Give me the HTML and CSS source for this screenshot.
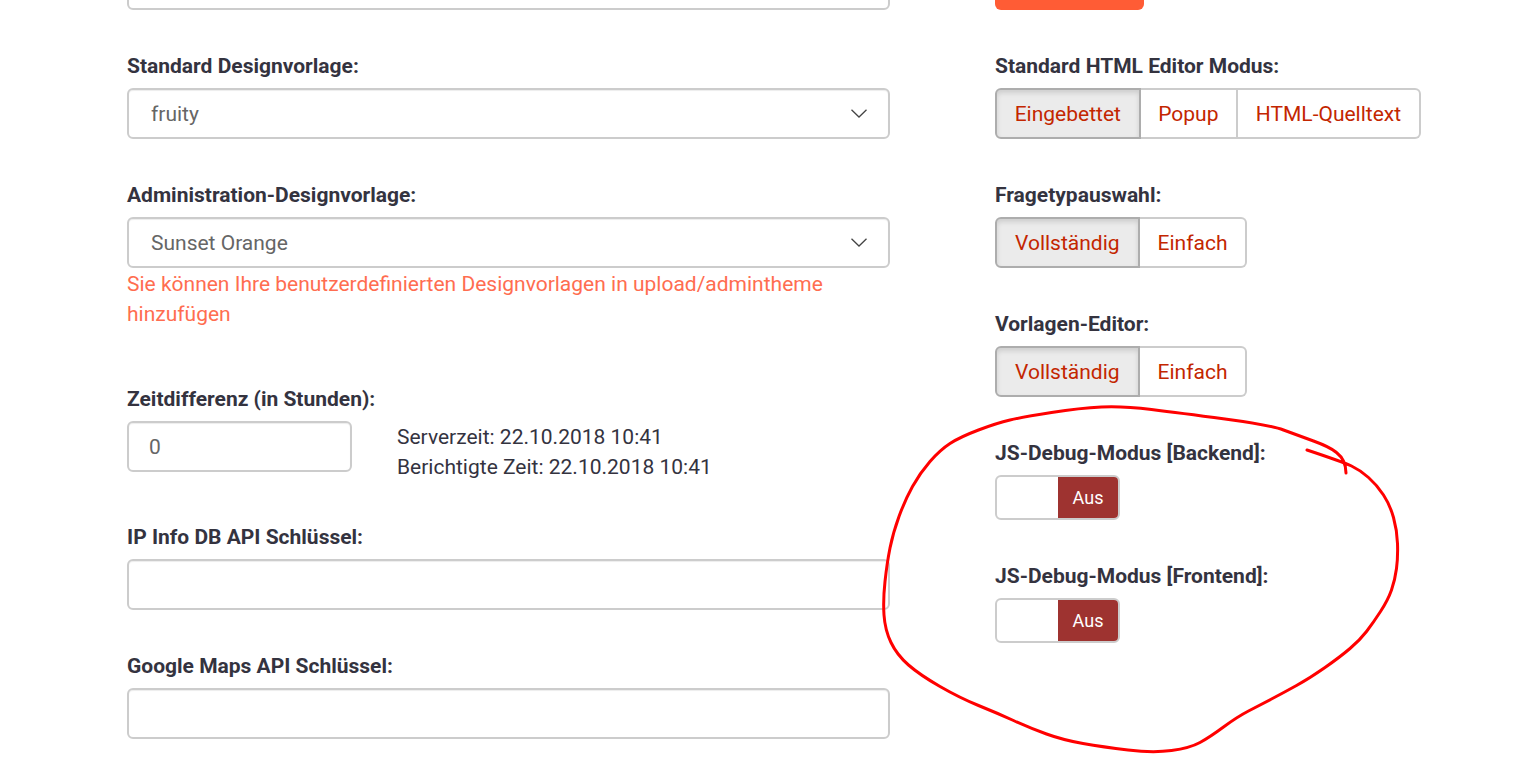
FILE: index.html
```html
<!DOCTYPE html>
<html lang="de">
<head>
<meta charset="utf-8">
<title>Globale Einstellungen</title>
<link rel="stylesheet" href="styles.css">
</head>
<body>
<main class="page">
  <div class="col col-left">
    <div class="group"><div class="control text-input"></div></div>
    <div class="group">
      <label class="label">Standard Designvorlage:</label>
      <div class="control select"><span>fruity</span>
        <svg class="chevron" viewBox="0 0 16 9"><path d="M.5.8 8 8 15.500.8"/></svg></div>
    </div>
    <div class="group group-help">
      <label class="label">Administration-Designvorlage:</label>
      <div class="control select"><span>Sunset Orange</span>
        <svg class="chevron" viewBox="0 0 16 9"><path d="M.5.8 8 8 15.500.8"/></svg></div>
      <p class="help">Sie können Ihre benutzerdefinierten Designvorlagen in upload/admintheme hinzufügen</p>
    </div>
    <div class="group group-time">
      <label class="label">Zeitdifferenz (in Stunden):</label>
      <div class="time-row">
        <div class="control number"><span>0</span></div>
        <div class="time-text"><div>Serverzeit: 22.10.2018 10:41</div><div>Berichtigte Zeit: 22.10.2018 10:41</div></div>
      </div>
    </div>
    <div class="group">
      <label class="label">IP Info DB API Schlüssel:</label>
      <div class="control text-input"></div>
    </div>
    <div class="group">
      <label class="label">Google Maps API Schlüssel:</label>
      <div class="control text-input"></div>
    </div>
  </div>
  <div class="col col-right">
    <div class="group"><div class="orange-btn"></div></div>
    <div class="group">
      <label class="label">Standard HTML Editor Modus:</label>
      <div class="btn-group btn-group-compact"><span class="btn active">Eingebettet</span><span class="btn">Popup</span><span class="btn">HTML-Quelltext</span></div>
    </div>
    <div class="group">
      <label class="label">Fragetypauswahl:</label>
      <div class="btn-group"><span class="btn active">Vollständig</span><span class="btn">Einfach</span></div>
    </div>
    <div class="group">
      <label class="label">Vorlagen-Editor:</label>
      <div class="btn-group"><span class="btn active">Vollständig</span><span class="btn">Einfach</span></div>
    </div>
    <div class="group">
      <label class="label">JS-Debug-Modus [Backend]:</label>
      <div class="toggle"><span class="toggle-off">Aus</span></div>
    </div>
    <div class="group">
      <label class="label">JS-Debug-Modus [Frontend]:</label>
      <div class="toggle"><span class="toggle-off">Aus</span></div>
    </div>
  </div>
</main>
<svg class="scribble" viewBox="0 0 1523 780" width="1523" height="780"><path d="M1307 450Q1343 462 1351.500 466Q1360 470 1368.500 477.500Q1377 485 1383.500 495Q1390 505 1393.500 517.500Q1397 530 1397.500 543.500Q1398 557 1396.500 568.500Q1395 580 1391.500 590Q1388 600 1380.500 611.500Q1373 623 1366.500 631.500Q1360 640 1350 648.500Q1340 657 1325 667.500Q1310 678 1296.500 685.500Q1283 693 1271.500 699Q1260 705 1248.500 711Q1237 717 1223.500 727Q1210 737 1200 742.500Q1190 748 1171.500 750.500Q1153 753 1128 750Q1103 747 1083 743.500Q1063 740 1046.500 734Q1030 728 1013.500 720.500Q997 713 978.500 705.500Q960 698 940 686.500Q920 675 908.500 665Q897 655 891 642.500Q885 630 884 615Q883 600 885 581.500Q887 563 890 548Q893 533 899 516.500Q905 500 912.500 486.500Q920 473 930 461.500Q940 450 950 443.500Q960 437 978.500 430Q997 423 1010 420Q1023 417 1051.500 412.500Q1080 408 1101.500 407Q1123 406 1151.500 409.500Q1180 413 1225 419Q1270 425 1283.500 430Q1297 435 1313.500 441Q1330 447 1336.500 452.500Q1346 460 1346 473"/></svg>
</body>
</html>
```
FILE: styles.css
```css
* { box-sizing: border-box; }
html, body { margin: 0; height: 780px; overflow: hidden; background: #fff; }
body { font-family: Roboto, "Liberation Sans", sans-serif; font-size: 21px; line-height: 30px; color: #34333f; }
.page { display: grid; grid-template-columns: 763px 1fr; column-gap: 105px; padding-left: 127px; margin-top: -41px; }
.group { margin-bottom: 41px; }
.group-help { margin-bottom: 55px; }
.group-time { margin-bottom: 40px; }
.label { display: block; height: 30px; margin-bottom: 7px; font-size: 21px; font-weight: 700; }
.control { height: 51px; border: 2px solid #ccc; border-radius: 6px; background: #fff; color: #666; padding: 0 21px 0 22px; display: flex; align-items: center; justify-content: space-between; box-shadow: inset 0 1px 1px rgba(0,0,0,.075); }
.chevron { width: 16px; height: 9px; fill: none; stroke: #444; stroke-width: 1.300; }
.help { margin: 1px 0 0; color: #ff6d50; }
.time-row { display: flex; gap: 45px; }
.number { width: 225px; padding: 0 20px; }
.time-text { padding-top: 1px; }
.orange-btn { width: 149px; height: 51px; background: #ff5c35; border-radius: 6px; }
.btn-group { display: inline-flex; height: 51px; }
.btn { display: flex; align-items: center; padding: 0 18px; border: 2px solid #ccc; border-left-width: 0; color: #c32600; background: #fff; }
.btn-group-compact .btn { padding: 0 17.670px; }
.btn:first-child { border-left-width: 2px; border-radius: 6px 0 0 6px; }
.btn:last-child { border-radius: 0 6px 6px 0; }
.btn.active { background: #ebebeb; border-color: #adadad; box-shadow: inset 0 3px 5px rgba(0,0,0,.125); }
.toggle { width: 125px; height: 45px; border: 2px solid #ccc; border-radius: 6px; display: flex; justify-content: flex-end; overflow: hidden; background: #fff; }
.toggle-off { width: 60px; background: #9e3330; color: #fff; font-size: 18px; display: flex; align-items: center; justify-content: center; }
.scribble { position: absolute; left: 0; top: 0; pointer-events: none; }
.scribble path { fill: none; stroke: #f00; stroke-width: 3; stroke-linecap: round; stroke-linejoin: round; }
```
